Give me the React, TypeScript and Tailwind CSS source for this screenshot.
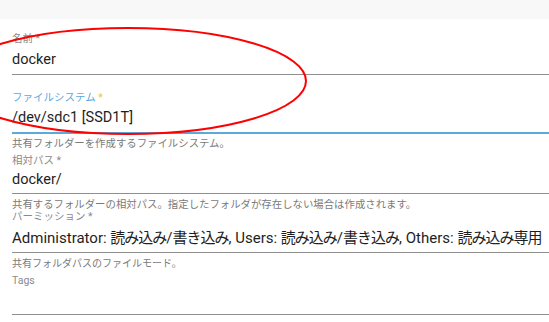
import React from "react";

const font = { fontFamily: "Roboto, 'Noto Sans CJK JP', sans-serif" };

function J({ children }: { children: React.ReactNode }) {
  return <span className="tracking-[-1px]">{children}</span>;
}

export default function App() {
  return (
    <div className="relative w-[549px] h-[322px] bg-white overflow-hidden" style={font}>
      <div className="h-[19px] bg-[#f8f8f8]" />
      <div className="pl-[12px]">
        {/* 名前 */}
        <div className="mt-[14px] text-[10.5px] leading-[12px] text-[#8a8a8a]">名前 *</div>
        <div className="h-[30px] border-b border-[#8f8f8f] text-[14.5px] leading-[29px] text-[#1e1e1e]">docker</div>

        {/* ファイルシステム */}
        <div className="mt-[17px] text-[10.5px] leading-[12px] text-[#5aaadf]">
          ファイルシステム <span className="text-[#f2c51f]">*</span>
        </div>
        <div className="h-[30px] border-b-2 border-[#5aaadf] text-[14.5px] leading-[28px] text-[#1e1e1e]">/dev/sdc1 [SSD1T]</div>
        <div className="mt-[4px] text-[10.4px] leading-[12px] text-[#7a7a7a]">共有フォルダーを作成するファイルシステム。</div>

        {/* 相対パス */}
        <div className="mt-[5px] text-[10.5px] leading-[12px] text-[#8a8a8a]">相対パス *</div>
        <div className="h-[27px] border-b border-[#8f8f8f] text-[14.5px] leading-[26px] text-[#1e1e1e]">docker/</div>
        <div className="mt-[6px] text-[10.4px] leading-[10px] text-[#7a7a7a] whitespace-nowrap">
          共有するフォルダーの相対パス。指定したフォルダが存在しない場合は作成されます。
        </div>

        {/* パーミッション */}
        <div className="mt-[2px] text-[10.5px] leading-[10px] text-[#8a8a8a]">パーミッション *</div>
        <div className="h-[31px] pt-[3px] border-b border-[#8f8f8f] text-[15px] leading-[27px] text-[#1e1e1e] whitespace-nowrap">
          Administrator: <J>読み込み</J>/<J>書き込み</J>, Users: <J>読み込み</J>/<J>書き込み</J>, Others: <J>読み込み専用</J>
        </div>
        <div className="mt-[5px] text-[10px] leading-[12px] text-[#7a7a7a]">共有フォルダパスのファイルモード。</div>

        {/* Tags */}
        <div className="mt-[5px] text-[10.5px] leading-[12px] text-[#8a8a8a]">Tags</div>
        <div className="h-[28px] border-b border-[#8f8f8f]" />
      </div>

      <svg className="absolute left-0 top-0 pointer-events-none" width="549" height="322">
        <ellipse cx="128" cy="81" rx="178" ry="53" fill="none" stroke="#ff0000" strokeWidth="2" />
      </svg>
    </div>
  );
}
